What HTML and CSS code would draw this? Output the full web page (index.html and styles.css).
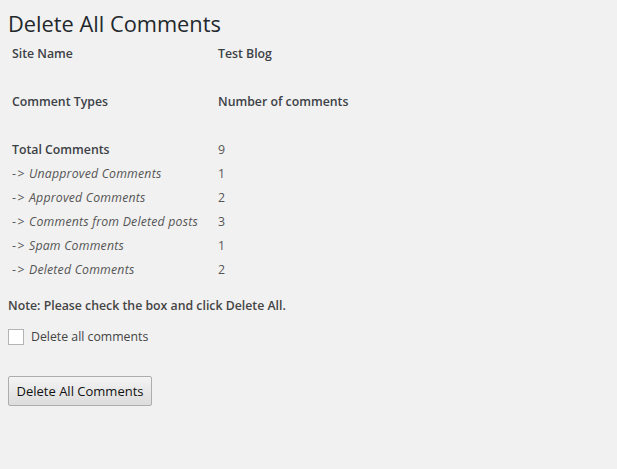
FILE: index.html
```html
<!DOCTYPE html>
<html>
<head>
<meta charset="utf-8">
<link rel="stylesheet" href="styles.css">
</head>
<body>
<div class="wrap">
  <h1 class="title">Delete All Comments</h1>
  <table class="stats">
    <tr><th>Site Name</th><th>Test Blog</th></tr>
    <tr class="blank"><td></td><td></td></tr>
    <tr><th>Comment Types</th><th>Number of comments</th></tr>
    <tr class="blank"><td></td><td></td></tr>
    <tr><th>Total Comments</th><td>9</td></tr>
    <tr><td><span class="arrow">-&gt;</span><em>Unapproved Comments</em></td><td>1</td></tr>
    <tr><td><span class="arrow">-&gt;</span><em>Approved Comments</em></td><td>2</td></tr>
    <tr><td><span class="arrow">-&gt;</span><em>Comments from Deleted posts</em></td><td>3</td></tr>
    <tr><td><span class="arrow">-&gt;</span><em>Spam Comments</em></td><td>1</td></tr>
    <tr><td><span class="arrow">-&gt;</span><em>Deleted Comments</em></td><td>2</td></tr>
  </table>
  <p class="note">Note: Please check the box and click Delete All.</p>
  <label class="check"><span class="box"></span>Delete all comments</label>
  <div class="actions"><button class="btn" type="button">Delete All Comments</button></div>
</div>
</body>
</html>
```
FILE: styles.css
```css
html, body {
  margin: 0;
  padding: 0;
  background: #f1f1f1;
}
body {
  font-family: "Open Sans", "Noto Sans", sans-serif;
  font-size: 12.3px;
  color: #444;
}
.wrap {
  padding: 0 8px;
}
.title {
  margin: 0;
  padding: 10px 0 4px;
  font-size: 21.8px;
  font-weight: 400;
  line-height: 28px;
  color: #23282d;
}
.stats {
  border-collapse: collapse;
  margin: 0;
}
.stats th, .stats td {
  height: 24px;
  padding: 0 4px;
  text-align: left;
  vertical-align: middle;
  line-height: 18px;
  font-size: 12.3px;
}
.stats th {
  font-weight: 600;
  color: #3c4146;
}
.stats th:first-child, .stats td:first-child {
  width: 198px;
}
.stats td {
  color: #555;
}
.arrow {
  display: inline-block;
  letter-spacing: 1.5px;
  margin-right: 3px;
}
.stats em {
  font-style: italic;
  letter-spacing: 0.2px;
}
.note {
  margin: 14px 0 0;
  font-weight: 600;
  line-height: 20px;
  color: #444;
}
.check {
  display: flex;
  align-items: center;
  gap: 7px;
  margin-top: 12px;
  color: #444;
  line-height: 18px;
}
.box {
  width: 14px;
  height: 14px;
  background: #fff;
  border: 1px solid #b4b4b4;
}
.actions {
  margin-top: 30px;
}
.btn {
  font-family: "Open Sans", "Noto Sans", sans-serif;
  font-size: 13px;
  color: #111;
  height: 30px;
  width: 144px;
  padding: 0;
  border: 1px solid #adadad;
  border-radius: 2px;
  background: linear-gradient(#f4f4f4, #dcdcdc);
}
```
